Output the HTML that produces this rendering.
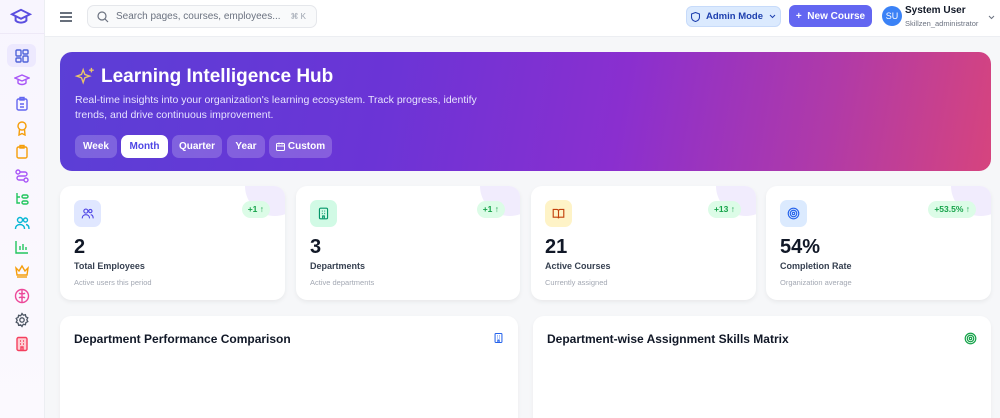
<!DOCTYPE html>
<html><head><meta charset="utf-8"><style>
*{box-sizing:border-box;margin:0;padding:0}
html,body{width:1000px;height:418px;overflow:hidden}
body{background:#f6f7f9;font-family:"Liberation Sans",sans-serif;position:relative}
.sb{position:absolute;left:0;top:0;width:45px;height:418px;background:linear-gradient(#f8f5fe,#fbf9fe);border-right:1px solid #eceef2}
.sb .logo{position:absolute;left:0;top:0;width:45px;height:34px;border-bottom:1px solid #eee9f7}
.ic{position:absolute;left:14px;width:16px;height:16px}
.hd{position:absolute;left:45px;top:0;right:0;height:37px;background:#fff;border-bottom:1px solid #eceef2}
.abs{position:absolute}
.fx{display:flex;align-items:center;justify-content:center}
.banner{position:absolute;left:60px;top:52px;width:931px;height:119px;border-radius:12px;background:linear-gradient(100deg,#5b3fd6 0%,#6b34d6 35%,#8a2fcf 60%,#b03aa8 82%,#d6447e 100%)}
.pill{position:absolute;top:135px;height:23px;border-radius:7px;background:rgba(255,255,255,.2);color:#fff;font-size:10px;font-weight:bold;display:flex;align-items:center;justify-content:center}
.card{position:absolute;top:186px;height:114px;background:#fff;border-radius:11px;box-shadow:0 2px 5px rgba(0,0,0,.06);overflow:hidden}
.card .blob{position:absolute;right:-20px;top:-30px;width:60px;height:60px;border-radius:50%;background:#f1ecfd}
.card .ib{position:absolute;left:14px;top:14px;width:27px;height:27px;border-radius:7px}
.card .num{position:absolute;left:14px;top:50px;font-size:20px;font-weight:bold;color:#111827}
.card .lb{position:absolute;left:14px;top:75px;font-size:9px;font-weight:bold;color:#374151}
.card .sub{position:absolute;left:14px;top:92px;font-size:7.5px;color:#a3a8b3}
.card .bd{position:absolute;top:15px;height:17px;border-radius:9px;background:#dcfce7;color:#16a34a;font-size:8.5px;font-weight:bold;line-height:17px;padding:0 6px}
.panel{position:absolute;top:316px;height:102px;background:#fff;border-radius:11px 11px 0 0;box-shadow:0 2px 5px rgba(0,0,0,.05)}
.panel h3{position:absolute;left:14px;top:16px;font-size:12px;font-weight:bold;color:#111827}
</style></head><body>
<div class="sb">
 <div class="logo"><svg class="ic" style="left:10px;top:8px;width:22px;height:18px" viewBox="0 0 24 20" fill="none" stroke="#5b4ee0" stroke-width="2.2"><path d="M2 7l10-5 10 5-10 5z"/><path d="M6 9v5c3 3 9 3 12 0V9"/></svg></div>
 <div class="abs" style="left:7px;top:44px;width:29px;height:23px;border-radius:6px;background:#ede9fe"></div>
 <svg class="ic" style="top:48px" viewBox="0 0 16 16" fill="none" stroke="#4f63d9" stroke-width="1.4"><rect x="2" y="2" width="5" height="6" rx="1"/><rect x="9" y="2" width="5" height="4" rx="1"/><rect x="9" y="8" width="5" height="6" rx="1"/><rect x="2" y="10" width="5" height="4" rx="1"/></svg>
 <svg class="ic" style="top:72px" viewBox="0 0 16 16" fill="none" stroke="#a855f7" stroke-width="1.4"><path d="M1 6l7-3 7 3-7 3z"/><path d="M4 8v3c2 2 6 2 8 0V8"/></svg>
 <svg class="ic" style="top:96px" viewBox="0 0 16 16" fill="none" stroke="#6366f1" stroke-width="1.4"><rect x="3" y="3" width="10" height="11" rx="1.5"/><rect x="6" y="1.5" width="4" height="2.5"/><path d="M6 8h4M6 11h4"/></svg>
 <svg class="ic" style="top:120px" viewBox="0 0 16 16" fill="none" stroke="#f59e0b" stroke-width="1.4"><circle cx="8" cy="6" r="4"/><path d="M5.5 9.5L5 15l3-1.5 3 1.5-.5-5.5"/></svg>
 <svg class="ic" style="top:144px" viewBox="0 0 16 16" fill="none" stroke="#f59e0b" stroke-width="1.4"><rect x="3" y="3" width="10" height="11" rx="1.5"/><rect x="6" y="1.5" width="4" height="2.5"/></svg>
 <svg class="ic" style="top:168px" viewBox="0 0 16 16" fill="none" stroke="#a855f7" stroke-width="1.4"><circle cx="4" cy="4" r="2"/><circle cx="12" cy="12" r="2"/><path d="M6 4h5a2 2 0 010 4H5a2 2 0 000 4h5"/></svg>
 <svg class="ic" style="top:191px" viewBox="0 0 16 16" fill="none" stroke="#22c55e" stroke-width="1.4"><path d="M3 2v10h3M3 6h3"/><rect x="8" y="4" width="6" height="3" rx="1.5"/><rect x="8" y="10" width="6" height="3" rx="1.5"/></svg>
 <svg class="ic" style="top:215px" viewBox="0 0 16 16" fill="none" stroke="#06b6d4" stroke-width="1.4"><circle cx="6" cy="5" r="2.5"/><path d="M1.5 14c0-3 2-4.5 4.5-4.5S10.5 11 10.5 14"/><circle cx="11.5" cy="5" r="2"/><path d="M12 9.5c2 .3 3 2 3 4.5"/></svg>
 <svg class="ic" style="top:239px" viewBox="0 0 16 16" fill="none" stroke="#22c55e" stroke-width="1.4"><path d="M2 2v12h12M6 11V7M9 11V5M12 11V8"/></svg>
 <svg class="ic" style="top:263px" viewBox="0 0 16 16" fill="none" stroke="#f59e0b" stroke-width="1.4"><path d="M2 5l3 3 3-5 3 5 3-3-1 7H3z"/><path d="M3 14h10"/></svg>
 <svg class="ic" style="top:288px" viewBox="0 0 16 16" fill="none" stroke="#ec4899" stroke-width="1.4"><circle cx="8" cy="8" r="6.5"/><path d="M8 2v12M5 5c1 1 2 1 3 0M11 5c-1 1-2 1-3 0M5 10c1-1 2-1 3 0M11 10c-1-1-2-1-3 0"/></svg>
 <svg class="ic" style="top:312px" viewBox="0 0 16 16" fill="none" stroke="#4b5563" stroke-width="1.3"><circle cx="8" cy="8" r="2.2"/><path d="M8 1.5l1.3 1.7 2.1-.5.5 2.1 1.9 1-1 1.9 1 1.9-1.9 1-.5 2.1-2.1-.5L8 14.5l-1.3-1.7-2.1.5-.5-2.1-1.9-1 1-1.9-1-1.9 1.9-1 .5-2.1 2.1.5z"/></svg>
 <svg class="ic" style="top:336px" viewBox="0 0 16 16" fill="none" stroke="#f43f5e" stroke-width="1.4"><rect x="3" y="1.5" width="10" height="13" rx="1.5" fill="#fecdd3"/><path d="M6 5h1M9 5h1M6 8h1M9 8h1M7 14v-3h2v3"/></svg>
</div>
<div class="hd">
 <svg class="abs" style="left:15px;top:12px" width="12" height="10" viewBox="0 0 12 10" stroke="#374151" stroke-width="1.4"><path d="M0 1h12M0 5h12M0 9h12"/></svg>
 <div class="abs" style="left:42px;top:5px;width:230px;height:23px;border:1px solid #e5e7eb;border-radius:7px;background:#f9fafb">
  <svg class="abs" style="left:9px;top:5px" width="12" height="12" viewBox="0 0 12 12" fill="none" stroke="#6b7280" stroke-width="1.2"><circle cx="5" cy="5" r="4"/><path d="M8 8l3 3"/></svg>
  <span class="abs" style="left:28px;top:5px;font-size:10px;color:#6b7280">Search pages, courses, employees...</span>
  <span class="abs" style="right:10px;top:6px;font-size:8px;color:#9ca3af">⌘ K</span>
 </div>
 <div class="abs fx" style="left:641px;top:6px;width:95px;height:21px;border-radius:6px;background:#dbeafe;border:1px solid #c7dbfa;color:#1e40af;font-size:9.5px;font-weight:bold;gap:6px">
  <svg width="9" height="10" viewBox="0 0 9 10" fill="none" stroke="#1e40af" stroke-width="1.1"><path d="M4.5 .5L8.5 2v3c0 2.5-2 4-4 4.5C2.5 9 .5 7.5.5 5V2z"/></svg>
  <span>Admin Mode</span><svg width="7" height="5" viewBox="0 0 7 5" fill="none" stroke="#1e40af" stroke-width="1"><path d="M1 1l2.5 2.5L6 1"/></svg></div>
 <div class="abs fx" style="left:744px;top:5px;width:83px;height:22px;border-radius:6px;background:#6366f1;color:#fff;font-size:10px;font-weight:bold">+&nbsp; New Course</div>
 <div class="abs fx" style="left:837px;top:6px;width:20px;height:20px;border-radius:50%;background:#3b82f6;color:#fff;font-size:9px">SU</div>
 <span class="abs" style="left:860px;top:5px;font-size:10px;font-weight:bold;color:#111827">System User</span>
 <span class="abs" style="left:860px;top:19px;font-size:7.5px;color:#6b7280">Skillzen_administrator</span>
 <svg class="abs" style="left:943px;top:15px" width="7" height="5" viewBox="0 0 7 5" fill="none" stroke="#6b7280" stroke-width="1"><path d="M1 1l2.5 2.5L6 1"/></svg>
</div>
<div class="banner">
 <svg class="abs" style="left:14px;top:14px" width="22" height="22" viewBox="0 0 24 24" fill="none" stroke="#e9c46a" stroke-width="1.5"><path d="M10 4l1.8 5.2L17 11l-5.2 1.8L10 18l-1.8-5.2L3 11l5.2-1.8z"/><path d="M19 2v5M16.5 4.5h5"/></svg>
 <div class="abs" style="left:41px;top:14px;font-size:19px;font-weight:bold;color:#fff">Learning Intelligence Hub</div>
 <div class="abs" style="left:15px;top:41px;width:410px;font-size:10.5px;line-height:15px;color:#e7e3ff">Real-time insights into your organization's learning ecosystem. Track progress, identify trends, and drive continuous improvement.</div>
</div>
<div class="pill" style="left:75px;width:42px">Week</div>
<div class="pill" style="left:121px;width:47px;background:#fff;color:#4f46e5">Month</div>
<div class="pill" style="left:172px;width:50px">Quarter</div>
<div class="pill" style="left:227px;width:38px">Year</div>
<div class="pill" style="left:269px;width:63px;gap:3px"><svg width="9" height="9" viewBox="0 0 9 9" fill="none" stroke="#fff" stroke-width="1"><rect x=".5" y="1.5" width="8" height="7" rx="1"/><path d="M.5 4h8M3 .5v2M6 .5v2"/></svg>Custom</div>

<div class="card" style="left:60px;width:225px"><div class="blob"></div><div class="ib" style="background:#e0e7ff"><svg style="margin:7px" width="13" height="13" viewBox="0 0 16 16" fill="none" stroke="#4f46e5" stroke-width="1.4"><circle cx="6" cy="5" r="2.5"/><path d="M1.5 14c0-3 2-4.5 4.5-4.5S10.5 11 10.5 14"/><circle cx="11.5" cy="5" r="2"/><path d="M12 9.5c2 .3 3 2 3 4.5"/></svg></div><div class="bd" style="right:15px">+1 ↑</div><div class="num">2</div><div class="lb">Total Employees</div><div class="sub">Active users this period</div></div>
<div class="card" style="left:296px;width:224px"><div class="blob"></div><div class="ib" style="background:#d1fae5"><svg style="margin:7px" width="13" height="13" viewBox="0 0 16 16" fill="none" stroke="#059669" stroke-width="1.4"><rect x="3" y="1.5" width="10" height="13" rx="1.5"/><path d="M6 5h1M9 5h1M6 8h1M9 8h1M7 14v-3h2v3"/></svg></div><div class="bd" style="right:15px">+1 ↑</div><div class="num">3</div><div class="lb">Departments</div><div class="sub">Active departments</div></div>
<div class="card" style="left:531px;width:225px"><div class="blob"></div><div class="ib" style="background:#fef3c7"><svg style="margin:7px" width="13" height="13" viewBox="0 0 16 16" fill="none" stroke="#c2410c" stroke-width="1.4"><path d="M1.5 3h4.5a2 2 0 012 2v9a1.5 1.5 0 00-1.5-1.5h-5zM14.5 3H10a2 2 0 00-2 2v9a1.5 1.5 0 011.5-1.5h5z"/></svg></div><div class="bd" style="right:15px">+13 ↑</div><div class="num">21</div><div class="lb">Active Courses</div><div class="sub">Currently assigned</div></div>
<div class="card" style="left:766px;width:225px"><div class="blob"></div><div class="ib" style="background:#dbeafe"><svg style="margin:7px" width="13" height="13" viewBox="0 0 16 16" fill="none" stroke="#2563eb" stroke-width="1.4"><circle cx="8" cy="8" r="6.5"/><circle cx="8" cy="8" r="4"/><circle cx="8" cy="8" r="1.5"/></svg></div><div class="bd" style="right:15px">+53.5% ↑</div><div class="num">54%</div><div class="lb">Completion Rate</div><div class="sub">Organization average</div></div>

<div class="panel" style="left:60px;width:458px"><h3>Department Performance Comparison</h3><svg class="abs" style="left:433px;top:16px" width="11" height="12" viewBox="0 0 16 16" fill="none" stroke="#2563eb" stroke-width="1.5"><rect x="3" y="1.5" width="10" height="13" rx="1"/><path d="M6 5h1M9 5h1M6 8h1M9 8h1M7 14v-3h2v3"/></svg></div>
<div class="panel" style="left:533px;width:458px"><h3>Department-wise Assignment Skills Matrix</h3><svg class="abs" style="left:431px;top:16px" width="13" height="13" viewBox="0 0 16 16" fill="none" stroke="#16a34a" stroke-width="1.5"><circle cx="8" cy="8" r="6.5"/><circle cx="8" cy="8" r="4"/><circle cx="8" cy="8" r="1.5"/></svg></div>
</body></html>
